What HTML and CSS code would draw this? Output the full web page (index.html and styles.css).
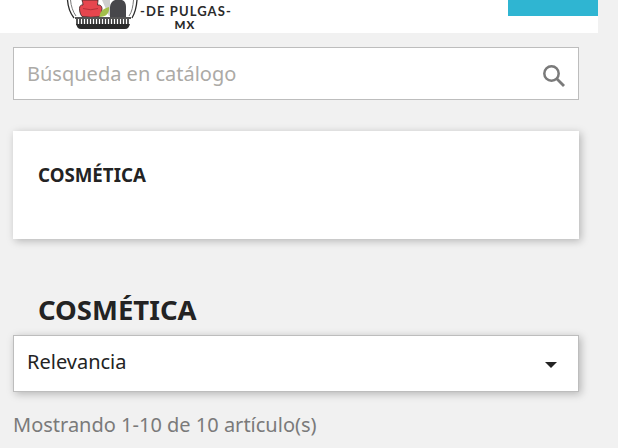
FILE: index.html
```html
<!DOCTYPE html>
<html lang="es">
<head>
<meta charset="utf-8">
<title>Cosmética</title>
<link rel="stylesheet" href="styles.css">
</head>
<body>
<header class="header">
  <div class="logo">
    <svg class="logo-mark" width="74" height="33" viewBox="0 0 74 33">
      <path d="M1.500 0 C2 7 4 13 8 18 M71 0 C70.500 7 69 13 66 18" fill="none" stroke="#2a2a2a" stroke-width="1.300"/>
      <path d="M4.500 0 C5 6 7 12 10 16 M67.500 0 C67 6 66 12 63 16" fill="none" stroke="#777" stroke-width="1"/>
      <path d="M36 0 L44 0 V16 H43Z" fill="#cfcfcf"/>
      <path d="M49 0 H56 C59 1 60 4 60 7 V17 H44 V7 C44 4 46 1 49 0Z" fill="#47474b"/>
      <path d="M16 0 H32 C32 2 31.500 3 31.500 5 C34 4.500 36 6 36 8.500 C36 12 35 14.500 33.500 16.500 Q25 18 16 16.500 C14.500 14.500 13.500 12 13.500 8.500 C13.500 6 15 4.500 17 5 C17 3 16.500 2 16 0Z" fill="#e6464e" stroke="#4a2a2a" stroke-width=".9"/>
      <path d="M17 8.500 Q25 11 32 8.500" fill="none" stroke="#a82a32" stroke-width=".8"/>
      <path d="M33.500 17 C33.500 12 37 8.500 43 7 C44 13 40 17 33.500 17Z" fill="#a3bf4b"/>
      <rect x="9" y="17" width="56" height="2" fill="#555"/>
      <path d="M11 19 V25 M14 19 V25 M17 19 V25 M20 19 V25 M23 19 V25 M26 19 V25 M29 19 V25 M32 19 V25 M35 19 V25 M38 19 V25 M41 19 V25 M44 19 V25 M47 19 V25 M50 19 V25 M53 19 V25 M56 19 V25 M59 19 V25 M62 19 V25" stroke="#2a2a2a" stroke-width="1.600"/>
      <path d="M10 24 H64 C63 27 62 29 59 29 H15 C12 29 11 27 10 24Z" fill="#2a2a2a"/>
    </svg>
    <div class="logo-text">
      <span class="logo-line">-DE PULGAS-</span>
      <span class="logo-sub">MX</span>
    </div>
  </div>
  <div class="header-accent"></div>
</header>
<main class="content">
  <form class="search">
    <span class="search-text">Búsqueda en catálogo</span>
    <svg class="search-icon" width="24" height="24" viewBox="0 0 24 24">
      <circle cx="9.500" cy="9.500" r="7.200" fill="none" stroke="#7a7a7a" stroke-width="2.500"/>
      <path d="M14.800 14.800 L22 22" stroke="#7a7a7a" stroke-width="2.800"/>
    </svg>
  </form>
  <section class="card">
    <h2 class="card-title">COSMÉTICA</h2>
  </section>
  <h1 class="page-title">COSMÉTICA</h1>
  <div class="select">
    <span>Relevancia</span>
    <span class="caret"></span>
  </div>
  <p class="count">Mostrando 1-10 de 10 artículo(s)</p>
</main>
</body>
</html>
```
FILE: styles.css
```css
html, body { margin: 0; padding: 0; }
body {
  width: 618px;
  height: 448px;
  overflow: hidden;
  background: #f1f1f1;
  font-family: "Noto Sans", "Open Sans", sans-serif;
  color: #232323;
}
.header {
  width: 598px;
  height: 33px;
  background: #fff;
  display: flex;
  justify-content: space-between;
  align-items: flex-start;
}
.logo {
  display: flex;
  margin-left: 66px;
  height: 33px;
  overflow: hidden;
}
.logo-mark { display: block; flex: none; }
.logo-text {
  display: flex;
  flex-direction: column;
  align-items: center;
  padding-top: 3px;
  font-family: "Lato", sans-serif;
  color: #2a2a2a;
}
.logo-line { font-size: 13px; line-height: 16px; letter-spacing: 1.100px; font-weight: 700; }
.logo-sub { font-size: 11.500px; line-height: 11px; letter-spacing: 1px; font-weight: 900; margin-right: 2px; }
.header-accent { width: 90px; height: 16px; background: #2fb5d2; }
.content { padding: 14px 39px 0 13px; }
.search {
  box-sizing: border-box;
  height: 53px;
  background: #fff;
  border: 1px solid #bdbdbd;
  padding: 0 12px 0 13px;
  display: flex;
  align-items: center;
  justify-content: space-between;
}
.search-text { font-size: 20px; color: #acaaa6; }
.search-icon { display: block; margin-top: 4px; }
.card {
  height: 108px;
  margin-top: 31px;
  background: #fff;
  box-shadow: 2px 2px 8px 0 rgba(0,0,0,.25);
  padding: 31px 25px 0;
  box-sizing: border-box;
}
.card-title { margin: 0; font-size: 18.720px; line-height: 26px; font-weight: 700; color: #232323; }
.page-title {
  margin: 51px 0 0 25px;
  font-size: 27.500px;
  line-height: 40px;
  font-weight: 700;
  color: #232323;
}
.select {
  box-sizing: border-box;
  height: 57px;
  margin-top: 5px;
  background: #fff;
  border: 1px solid #bdbdbd;
  box-shadow: 2px 2px 8px 0 rgba(0,0,0,.25);
  padding: 0 21px 5px 13px;
  display: flex;
  align-items: center;
  justify-content: space-between;
  font-size: 20px;
  line-height: 27px;
}
.caret {
  width: 0;
  height: 0;
  border-left: 6px solid transparent;
  border-right: 6px solid transparent;
  border-top: 6px solid #232323;
  margin-top: 7px;
}
.count { margin: 19px 0 0; font-size: 20px; line-height: 27px; color: #7a7a7a; }
```
